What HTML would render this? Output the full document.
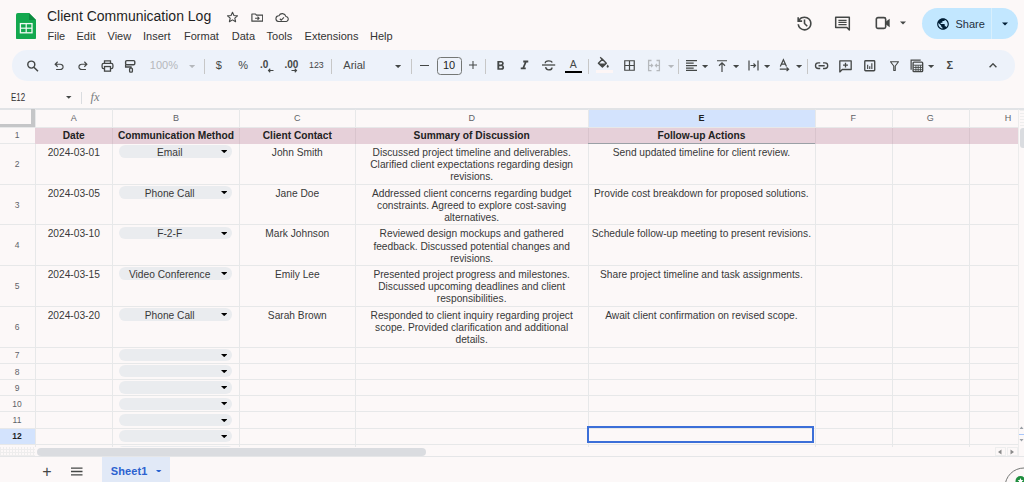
<!DOCTYPE html>
<html><head><meta charset="utf-8"><title>Client Communication Log</title>
<style>
html,body{margin:0;padding:0;}
body{width:1024px;height:482px;overflow:hidden;position:relative;background:#fcf8f8;font-family:"Liberation Sans",sans-serif;}
</style></head><body>
<svg style="position:absolute;left:16.4px;top:12.5px;" width="20" height="26.5" viewBox="0 0 20 26.5"><path d="M0 1.8Q0 0 1.8 0H13L20 7V24.7Q20 26.5 18.2 26.5H1.8Q0 26.5 0 24.7Z" fill="#13a84f"/><path d="M13 0L20 7H13Z" fill="#0b8a3f"/><rect x="4.4" y="10.6" width="11.6" height="9.2" fill="none" stroke="#f4fbf6" stroke-width="1.3"/><line x1="4.4" y1="15.2" x2="16" y2="15.2" stroke="#f4fbf6" stroke-width="1.2"/><line x1="10.2" y1="10.6" x2="10.2" y2="19.8" stroke="#f4fbf6" stroke-width="1.2"/></svg><div style="position:absolute;left:47px;top:9.15px;font-size:14px;line-height:14px;color:#1f1f1f;font-weight:400;white-space:nowrap;">Client Communication Log</div><svg style="position:absolute;left:226px;top:11px;" width="13" height="12" viewBox="0 0 24 24"><path d="M12 2.5l2.9 6.6 7.1.6-5.4 4.7 1.6 7-6.2-3.7-6.2 3.7 1.6-7L2 9.7l7.1-.6z" fill="none" stroke="#444746" stroke-width="2.2" stroke-linejoin="round"/></svg><svg style="position:absolute;left:250.7px;top:13px;" width="12.6" height="9.2" viewBox="0 0 28 20"><path d="M2 2h8l2 2.5h14v13.5H2z" fill="none" stroke="#444746" stroke-width="2.6" stroke-linejoin="round"/><path d="M9 11.5h9M14.5 8l3.5 3.5-3.5 3.5" fill="none" stroke="#444746" stroke-width="2.4"/></svg><svg style="position:absolute;left:274.8px;top:13px;" width="13.8" height="9.2" viewBox="0 0 30 20"><path d="M8 18.5h15a5.5 5.5 0 0 0 .6-11A8 8 0 0 0 8.6 6 6.2 6.2 0 0 0 8 18.5z" fill="none" stroke="#444746" stroke-width="2.4" stroke-linejoin="round"/><path d="M10.5 12.5l3 3 6-6" fill="none" stroke="#444746" stroke-width="2.4"/></svg><div style="position:absolute;left:47.5px;top:30.89px;font-size:11px;line-height:11px;color:#333;font-weight:400;white-space:nowrap;">File</div><div style="position:absolute;left:76.5px;top:30.89px;font-size:11px;line-height:11px;color:#333;font-weight:400;white-space:nowrap;">Edit</div><div style="position:absolute;left:107.5px;top:30.89px;font-size:11px;line-height:11px;color:#333;font-weight:400;white-space:nowrap;">View</div><div style="position:absolute;left:143px;top:30.89px;font-size:11px;line-height:11px;color:#333;font-weight:400;white-space:nowrap;">Insert</div><div style="position:absolute;left:184px;top:30.89px;font-size:11px;line-height:11px;color:#333;font-weight:400;white-space:nowrap;">Format</div><div style="position:absolute;left:231.8px;top:30.89px;font-size:11px;line-height:11px;color:#333;font-weight:400;white-space:nowrap;">Data</div><div style="position:absolute;left:266.6px;top:30.89px;font-size:11px;line-height:11px;color:#333;font-weight:400;white-space:nowrap;">Tools</div><div style="position:absolute;left:304.6px;top:30.89px;font-size:11px;line-height:11px;color:#333;font-weight:400;white-space:nowrap;">Extensions</div><div style="position:absolute;left:370px;top:30.89px;font-size:11px;line-height:11px;color:#333;font-weight:400;white-space:nowrap;">Help</div><svg style="position:absolute;left:795px;top:13.5px;" width="19" height="19" viewBox="0 -960 960 960"><path d="M480-120q-138 0-240.5-91.5T122-440h82q14 104 92.5 172T480-200q117 0 198.5-81.5T760-480q0-117-81.5-198.5T480-760q-69 0-129 32t-101 88h110v80H120v-240h80v94q51-64 124.5-99T480-840q75 0 140.5 28.5t114 77q48.5 48.5 77 114T840-480q0 75-28.5 140.5t-77 114q-48.5 48.5-114 77T480-120Zm112-192L440-464v-216h80v184l128 128-56 56Z" fill="#444746"/></svg><svg style="position:absolute;left:834px;top:16px;" width="17" height="15" viewBox="0 0 24 22"><path d="M2 2h20v18.5L18.5 17H2z" fill="none" stroke="#444746" stroke-width="2.2" stroke-linejoin="round"/><path d="M6 6.5h12M6 9.5h12M6 12.5h12" stroke="#444746" stroke-width="1.8"/></svg><svg style="position:absolute;left:875px;top:16px;" width="16" height="14" viewBox="0 0 24 20"><rect x="2" y="2" width="14" height="16" rx="2.5" fill="none" stroke="#444746" stroke-width="2.4"/><path d="M16 8l6-4.5v13L16 12z" fill="#444746"/></svg><svg style="position:absolute;left:899.5px;top:21px;" width="6" height="4" viewBox="0 0 10 5"><path d="M0 0h10L5 5z" fill="#444746"/></svg><div style="position:absolute;left:922.3px;top:8px;width:95.7px;height:31px;background:#c2e7ff;border-radius:15.5px;"></div><div style="position:absolute;left:991px;top:8px;width:1px;height:31px;background:#d8effc;"></div><svg style="position:absolute;left:936px;top:16.7px;" width="14" height="14" viewBox="0 0 24 24"><path d="M12 2C6.48 2 2 6.48 2 12s4.48 10 10 10 10-4.48 10-10S17.52 2 12 2zm-1 17.93c-3.95-.49-7-3.85-7-7.93 0-.62.08-1.21.21-1.79L9 15v1c0 1.1.9 2 2 2v1.93zm6.9-2.54c-.26-.81-1-1.39-1.9-1.39h-1v-3c0-.55-.45-1-1-1H8v-2h2c.55 0 1-.45 1-1V7h2c1.1 0 2-.9 2-2v-.41c2.93 1.19 5 4.06 5 7.41 0 2.08-.8 3.97-2.1 5.39z" fill="#001d35"/></svg><div style="position:absolute;left:955.5px;top:18.59px;font-size:11px;line-height:11px;color:#1e2f40;font-weight:400;white-space:nowrap;">Share</div><svg style="position:absolute;left:1002px;top:21.5px;" width="6" height="4" viewBox="0 0 10 5"><path d="M0 0h10L5 5z" fill="#001d35"/></svg><div style="position:absolute;left:12px;top:50px;width:1002.5px;height:30.5px;background:#edf2fa;border-radius:15px;"></div><div style="position:absolute;left:204px;top:58.5px;width:1px;height:15px;background:#c7c7c7;"></div><div style="position:absolute;left:331px;top:58.5px;width:1px;height:15px;background:#c7c7c7;"></div><div style="position:absolute;left:411px;top:58.5px;width:1px;height:15px;background:#c7c7c7;"></div><div style="position:absolute;left:485px;top:58.5px;width:1px;height:15px;background:#c7c7c7;"></div><div style="position:absolute;left:588px;top:58.5px;width:1px;height:15px;background:#c7c7c7;"></div><div style="position:absolute;left:678px;top:58.5px;width:1px;height:15px;background:#c7c7c7;"></div><div style="position:absolute;left:807px;top:58.5px;width:1px;height:15px;background:#c7c7c7;"></div><svg style="position:absolute;left:25px;top:58px;" width="16" height="16" viewBox="0 0 16 16"><circle cx="6.3" cy="6.6" r="3.5" fill="none" stroke="#444746" stroke-width="1.45"/><path d="M8.9 9.2L13 13.2" stroke="#444746" stroke-width="1.5"/></svg><svg style="position:absolute;left:51.8px;top:59.3px;" width="14" height="14" viewBox="0 -960 960 960"><path d="M280-200v-80h284q63 0 109.5-40T720-420q0-60-46.5-100T564-560H312l104 104-56 56-200-200 200-200 56 56-104 104h252q97 0 166.5 63T800-420q0 94-69.5 157T564-200H280Z" fill="#444746"/></svg><svg style="position:absolute;left:75.8px;top:59.3px;" width="14" height="14" viewBox="0 -960 960 960"><g transform="scale(-1 1) translate(-960 0)"><path d="M280-200v-80h284q63 0 109.5-40T720-420q0-60-46.5-100T564-560H312l104 104-56 56-200-200 200-200 56 56-104 104h252q97 0 166.5 63T800-420q0 94-69.5 157T564-200H280Z" fill="#444746"/></g></svg><svg style="position:absolute;left:100.5px;top:59.5px;" width="13" height="12" viewBox="0 0 24 22"><path d="M6.5 6V1.5h11V6" fill="none" stroke="#444746" stroke-width="2.4"/><rect x="2" y="6" width="20" height="10" rx="3" fill="none" stroke="#444746" stroke-width="2.4"/><rect x="6.5" y="12" width="11" height="8.5" fill="#edf2fa" stroke="#444746" stroke-width="2.4"/></svg><svg style="position:absolute;left:120px;top:56px;" width="20" height="20" viewBox="120 56 20 20"><rect x="125.6" y="60.6" width="9.2" height="4.2" rx="1.2" fill="none" stroke="#444746" stroke-width="1.4"/><path d="M125.6 64.5V67H131V68.2" fill="none" stroke="#444746" stroke-width="1.3"/><rect x="129.6" y="68.2" width="2.8" height="4" rx="0.9" fill="none" stroke="#444746" stroke-width="1.3"/></svg><div style="position:absolute;left:149.8px;top:59.99px;font-size:11px;line-height:11px;color:#b5b8bc;font-weight:400;white-space:nowrap;">100%</div><svg style="position:absolute;left:188.5px;top:64.5px;" width="6.2" height="3.1" viewBox="0 0 10 5"><path d="M0 0h10L5 5z" fill="#b5b8bc"/></svg><div style="position:absolute;left:215.8px;top:59.99px;font-size:11px;line-height:11px;color:#444746;font-weight:400;white-space:nowrap;">$</div><div style="position:absolute;left:238.3px;top:59.99px;font-size:11px;line-height:11px;color:#444746;font-weight:400;white-space:nowrap;">%</div><div style="position:absolute;left:260px;top:59.53px;font-size:10px;line-height:10px;color:#444746;font-weight:700;white-space:nowrap;">.0</div><svg style="position:absolute;left:267px;top:67.5px;" width="7" height="5" viewBox="0 0 14 10"><path d="M13 5H3M6.5 1.5L3 5l3.5 3.5" fill="none" stroke="#444746" stroke-width="2.2"/></svg><div style="position:absolute;left:284.5px;top:59.53px;font-size:10px;line-height:10px;color:#444746;font-weight:700;white-space:nowrap;">.00</div><svg style="position:absolute;left:291px;top:67.5px;" width="7" height="5" viewBox="0 0 14 10"><path d="M1 5h10M7.5 1.5L11 5 7.5 8.5" fill="none" stroke="#444746" stroke-width="2.2"/></svg><div style="position:absolute;left:309px;top:61.15px;font-size:8.8px;line-height:8.8px;color:#444746;font-weight:400;white-space:nowrap;">123</div><div style="position:absolute;left:343.3px;top:60.19px;font-size:11px;line-height:11px;color:#444746;font-weight:400;white-space:nowrap;">Arial</div><svg style="position:absolute;left:394.5px;top:64.5px;" width="6.2" height="3.1" viewBox="0 0 10 5"><path d="M0 0h10L5 5z" fill="#444746"/></svg><div style="position:absolute;left:420px;top:64.8px;width:8.6px;height:1.2px;background:#444746;"></div><div style="position:absolute;left:436.5px;top:56.5px;width:25px;height:18px;border:1px solid #747775;border-radius:3.5px;box-sizing:border-box;"></div><div style="position:absolute;left:439.00px;width:20px;text-align:center;top:60.19px;font-size:11px;line-height:11px;color:#1f1f1f;font-weight:400;white-space:nowrap;">10</div><svg style="position:absolute;left:468.5px;top:61px;" width="8" height="8" viewBox="0 0 10 10"><path d="M5 0v10M0 5h10" stroke="#444746" stroke-width="1.3"/></svg><svg style="position:absolute;left:492.5px;top:57.5px;" width="15" height="16" viewBox="0 0 24 24"><path d="M15.6 10.79c.97-.67 1.65-1.77 1.65-2.79 0-2.26-1.75-4-4-4H7v14h7.04c2.09 0 3.71-1.7 3.71-3.79 0-1.52-.86-2.82-2.15-3.42zM10 6.5h3c.83 0 1.5.67 1.5 1.5s-.67 1.5-1.5 1.5h-3v-3zm3.5 9H10v-3h3.5c.83 0 1.5.67 1.5 1.5s-.67 1.5-1.5 1.5z" fill="#444746"/></svg><svg style="position:absolute;left:516.5px;top:57px;" width="15" height="17" viewBox="0 0 24 24"><path d="M10 4v3h2.21l-3.42 8H6v3h8v-3h-2.21l3.42-8H18V4z" fill="#444746"/></svg><svg style="position:absolute;left:540px;top:56px;" width="18" height="18" viewBox="540 56 18 18"><path d="M545.3 63.2Q545.1 60.9 548.6 60.9Q551.6 60.9 552.2 62.6M545.6 67.2Q546.2 69.9 548.6 69.9Q552 69.9 552 67.4" fill="none" stroke="#444746" stroke-width="1.4"/><path d="M542 65H555.2" stroke="#444746" stroke-width="1.3"/></svg><div style="position:absolute;left:563.30px;width:20px;text-align:center;top:58.71px;font-size:10.5px;line-height:10.5px;color:#444746;font-weight:400;white-space:nowrap;">A</div><div style="position:absolute;left:564.5px;top:70.5px;width:17.5px;height:2.6px;background:#000;"></div><svg style="position:absolute;left:590px;top:52px;" width="26" height="26" viewBox="590 52 26 26"><path d="M600.2 57.3L602.6 59.8" stroke="#444746" stroke-width="1.3"/><path d="M598.4 63.2L602.4 59.3L606.3 63.2L602.4 67z" fill="none" stroke="#444746" stroke-width="1.4" stroke-linejoin="round"/><path d="M598.6 63.4H606.1L602.4 67z" fill="#444746"/><path d="M607.7 64.6Q608.8 65.9 608.8 66.6A1.1 1.1 0 0 1 606.6 66.6Q606.6 65.9 607.7 64.6z" fill="#444746"/></svg><div style="position:absolute;left:595.7px;top:70px;width:17.3px;height:3px;background:#fdf6f6;"></div><svg style="position:absolute;left:624px;top:60px;" width="11" height="11" viewBox="0 0 22 22"><path d="M1.5 1.5h19v19h-19zM11 1.5v19M1.5 11h19" fill="none" stroke="#444746" stroke-width="2.4"/></svg><svg style="position:absolute;left:644px;top:56px;" width="20" height="20" viewBox="644 56 20 20"><path d="M651.5 60.5H648.6V70.6H651.5M656.5 60.5H659.4V70.6H656.5" fill="none" stroke="#b5b8bc" stroke-width="1.3"/><path d="M648.6 65.5H652.6M651 63.9L652.6 65.5 651 67.1M659.4 65.5H655.4M657 63.9L655.4 65.5 657 67.1" fill="none" stroke="#b5b8bc" stroke-width="1.2"/></svg><svg style="position:absolute;left:667.5px;top:64.5px;" width="6.2" height="3.1" viewBox="0 0 10 5"><path d="M0 0h10L5 5z" fill="#b5b8bc"/></svg><svg style="position:absolute;left:686px;top:60px;" width="11" height="11" viewBox="0 0 20 20"><path d="M0 1h20M0 5.6h14M0 10.2h20M0 14.8h14M0 19h20" stroke="#444746" stroke-width="2.2"/></svg><svg style="position:absolute;left:702px;top:64.5px;" width="6.2" height="3.1" viewBox="0 0 10 5"><path d="M0 0h10L5 5z" fill="#444746"/></svg><svg style="position:absolute;left:717px;top:59.5px;" width="10" height="12" viewBox="0 0 20 24"><path d="M0 1.5h20M10 24V6M4 11.5l6-6 6 6" fill="none" stroke="#444746" stroke-width="2.4"/></svg><svg style="position:absolute;left:733px;top:64.5px;" width="6.2" height="3.1" viewBox="0 0 10 5"><path d="M0 0h10L5 5z" fill="#444746"/></svg><svg style="position:absolute;left:747.5px;top:60px;" width="11" height="11" viewBox="0 0 22 22"><path d="M2 1v20M20 1v20M5 11h10M11 7l4 4-4 4" fill="none" stroke="#444746" stroke-width="2.4"/></svg><svg style="position:absolute;left:764px;top:64.5px;" width="6.2" height="3.1" viewBox="0 0 10 5"><path d="M0 0h10L5 5z" fill="#444746"/></svg><svg style="position:absolute;left:776px;top:56px;" width="18" height="18" viewBox="776 56 18 18"><path d="M780.3 66.6L783.4 59.8L786.5 66.6M781.4 64.2H785.4" fill="none" stroke="#444746" stroke-width="1.2"/><path d="M779.8 69.2H788.5M786.6 67.4L788.6 69.2 786.6 71" fill="none" stroke="#444746" stroke-width="1.2"/></svg><svg style="position:absolute;left:795.5px;top:64.5px;" width="6.2" height="3.1" viewBox="0 0 10 5"><path d="M0 0h10L5 5z" fill="#444746"/></svg><svg style="position:absolute;left:805px;top:52px;" width="26" height="26" viewBox="805 52 26 26"><path d="M820.2 62.9H818.3A2.8 2.8 0 0 0 818.3 68.5H820.2M823 62.9H824.9A2.8 2.8 0 0 1 824.9 68.5H823M818.5 65.7H824.7" fill="none" stroke="#444746" stroke-width="1.35"/></svg><svg style="position:absolute;left:839px;top:59.5px;" width="13" height="13" viewBox="0 0 24 24"><path d="M1.5 1.5h21v16H6l-4.5 4.5z" fill="none" stroke="#444746" stroke-width="2.4" stroke-linejoin="round"/><path d="M12 5v9M7.5 9.5h9" stroke="#444746" stroke-width="2.4"/></svg><svg style="position:absolute;left:864px;top:60px;" width="11.5" height="11.5" viewBox="0 0 22 22"><rect x="1.5" y="1.5" width="19" height="19" rx="1.5" fill="none" stroke="#444746" stroke-width="2.6"/><path d="M7 9v8M11 12v5M15 6v11" stroke="#444746" stroke-width="2.2"/></svg><svg style="position:absolute;left:890px;top:61px;" width="9" height="10" viewBox="0 0 18 20"><path d="M1 1.5h16L10.5 10v9h-3v-9z" fill="none" stroke="#444746" stroke-width="2.2" stroke-linejoin="round"/></svg><svg style="position:absolute;left:910px;top:59px;" width="13.5" height="13.5" viewBox="0 0 24 24"><path d="M2 19V2h17" fill="none" stroke="#444746" stroke-width="2.2"/><rect x="5.5" y="5.5" width="17" height="17" rx="1.5" fill="none" stroke="#444746" stroke-width="2.4"/><path d="M6 11h16M10.5 11v11M14.5 11v11M18.5 11v11M6 15h16M6 19h16" stroke="#444746" stroke-width="1.6"/></svg><svg style="position:absolute;left:927.5px;top:64.5px;" width="6.2" height="3.1" viewBox="0 0 10 5"><path d="M0 0h10L5 5z" fill="#444746"/></svg><div style="position:absolute;left:946.5px;top:60.19px;font-size:11px;line-height:11px;color:#444746;font-weight:700;white-space:nowrap;">&#931;</div><svg style="position:absolute;left:989px;top:63px;" width="8" height="5" viewBox="0 0 14 8"><path d="M1 7l6-6 6 6" fill="none" stroke="#444746" stroke-width="2.4"/></svg><div style="position:absolute;left:11.2px;top:92.31px;font-size:10.5px;line-height:10.5px;color:#333;font-weight:400;white-space:nowrap;transform:scaleX(0.76);transform-origin:0 0;">E12</div><svg style="position:absolute;left:66px;top:96px;" width="5.5" height="2.75" viewBox="0 0 10 5"><path d="M0 0h10L5 5z" fill="#444746"/></svg><div style="position:absolute;left:80.5px;top:92.2px;width:1px;height:12px;background:#dadce0;"></div><div style="position:absolute;left:90.5px;top:91.02px;font-size:12.5px;line-height:12.5px;color:#7a7e82;font-weight:400;white-space:nowrap;font-family:Liberation Serif;font-style:italic;">fx</div><div style="position:absolute;left:588px;top:109px;width:226.8px;height:18px;background:#d3e3fd;"></div><div style="position:absolute;left:0px;top:428px;width:35px;height:16.2px;background:#d3e3fd;"></div><div style="position:absolute;left:0px;top:108px;width:1024px;height:1.5px;background:#e1e3e6;"></div><div style="position:absolute;left:111.5px;top:109px;width:1px;height:338px;background:#e7e8e9;"></div><div style="position:absolute;left:238.5px;top:109px;width:1px;height:338px;background:#e7e8e9;"></div><div style="position:absolute;left:354.5px;top:109px;width:1px;height:338px;background:#e7e8e9;"></div><div style="position:absolute;left:587.5px;top:109px;width:1px;height:338px;background:#e7e8e9;"></div><div style="position:absolute;left:814.5px;top:109px;width:1px;height:338px;background:#e7e8e9;"></div><div style="position:absolute;left:891.5px;top:109px;width:1px;height:338px;background:#e7e8e9;"></div><div style="position:absolute;left:968.5px;top:109px;width:1px;height:338px;background:#e7e8e9;"></div><div style="position:absolute;left:1017.5px;top:109px;width:1px;height:338px;background:#e7e8e9;"></div><div style="position:absolute;left:34.5px;top:109px;width:1px;height:338px;background:#e7e8e9;"></div><div style="position:absolute;left:0px;top:126.5px;width:1017.5px;height:1px;background:#e7e8e9;"></div><div style="position:absolute;left:0px;top:142.8px;width:35px;height:1px;background:#e7e8e9;"></div><div style="position:absolute;left:0px;top:183.6px;width:1017.5px;height:1px;background:#e7e8e9;"></div><div style="position:absolute;left:0px;top:224.3px;width:1017.5px;height:1px;background:#e7e8e9;"></div><div style="position:absolute;left:0px;top:265.0px;width:1017.5px;height:1px;background:#e7e8e9;"></div><div style="position:absolute;left:0px;top:305.7px;width:1017.5px;height:1px;background:#e7e8e9;"></div><div style="position:absolute;left:0px;top:346.5px;width:1017.5px;height:1px;background:#e7e8e9;"></div><div style="position:absolute;left:0px;top:362.7px;width:1017.5px;height:1px;background:#e7e8e9;"></div><div style="position:absolute;left:0px;top:378.9px;width:1017.5px;height:1px;background:#e7e8e9;"></div><div style="position:absolute;left:0px;top:395.1px;width:1017.5px;height:1px;background:#e7e8e9;"></div><div style="position:absolute;left:0px;top:411.3px;width:1017.5px;height:1px;background:#e7e8e9;"></div><div style="position:absolute;left:0px;top:427.5px;width:1017.5px;height:1px;background:#e7e8e9;"></div><div style="position:absolute;left:0px;top:443.7px;width:1017.5px;height:1px;background:#e7e8e9;"></div><div style="position:absolute;left:35px;top:127.5px;width:982.5px;height:16px;background:#e6d0d9;"></div><div style="position:absolute;left:111.5px;top:127.5px;width:1px;height:16px;background:#d9c4cd;"></div><div style="position:absolute;left:238.5px;top:127.5px;width:1px;height:16px;background:#d9c4cd;"></div><div style="position:absolute;left:354.5px;top:127.5px;width:1px;height:16px;background:#d9c4cd;"></div><div style="position:absolute;left:587.5px;top:127.5px;width:1px;height:16px;background:#d9c4cd;"></div><div style="position:absolute;left:814.5px;top:127.5px;width:1px;height:16px;background:#d9c4cd;"></div><div style="position:absolute;left:891.5px;top:127.5px;width:1px;height:16px;background:#d9c4cd;"></div><div style="position:absolute;left:968.5px;top:127.5px;width:1px;height:16px;background:#d9c4cd;"></div><div style="position:absolute;left:588px;top:142.5px;width:226.8px;height:1.3px;background:#9aa0a6;"></div><div style="position:absolute;left:31px;top:109px;width:4px;height:18px;background:#c5c6c8;"></div><div style="position:absolute;left:0px;top:123.5px;width:35px;height:3.5px;background:#c5c6c8;"></div><div style="position:absolute;left:43.75px;width:60px;text-align:center;top:113.88px;font-size:9px;line-height:9px;color:#5f6368;font-weight:400;white-space:nowrap;">A</div><div style="position:absolute;left:145.90px;width:60px;text-align:center;top:113.88px;font-size:9px;line-height:9px;color:#5f6368;font-weight:400;white-space:nowrap;">B</div><div style="position:absolute;left:267.30px;width:60px;text-align:center;top:113.88px;font-size:9px;line-height:9px;color:#5f6368;font-weight:400;white-space:nowrap;">C</div><div style="position:absolute;left:441.65px;width:60px;text-align:center;top:113.88px;font-size:9px;line-height:9px;color:#5f6368;font-weight:400;white-space:nowrap;">D</div><div style="position:absolute;left:671.40px;width:60px;text-align:center;top:113.88px;font-size:9px;line-height:9px;color:#1f1f1f;font-weight:700;white-space:nowrap;">E</div><div style="position:absolute;left:823.15px;width:60px;text-align:center;top:113.88px;font-size:9px;line-height:9px;color:#5f6368;font-weight:400;white-space:nowrap;">F</div><div style="position:absolute;left:900.25px;width:60px;text-align:center;top:113.88px;font-size:9px;line-height:9px;color:#5f6368;font-weight:400;white-space:nowrap;">G</div><div style="position:absolute;left:978.00px;width:60px;text-align:center;top:113.88px;font-size:9px;line-height:9px;color:#5f6368;font-weight:400;white-space:nowrap;">H</div><div style="position:absolute;left:2.00px;width:30px;text-align:center;top:131.45px;font-size:8.5px;line-height:8.5px;color:#5f6368;font-weight:400;white-space:nowrap;">1</div><div style="position:absolute;left:2.00px;width:30px;text-align:center;top:160.00px;font-size:8.5px;line-height:8.5px;color:#5f6368;font-weight:400;white-space:nowrap;">2</div><div style="position:absolute;left:2.00px;width:30px;text-align:center;top:200.75px;font-size:8.5px;line-height:8.5px;color:#5f6368;font-weight:400;white-space:nowrap;">3</div><div style="position:absolute;left:2.00px;width:30px;text-align:center;top:241.45px;font-size:8.5px;line-height:8.5px;color:#5f6368;font-weight:400;white-space:nowrap;">4</div><div style="position:absolute;left:2.00px;width:30px;text-align:center;top:282.15px;font-size:8.5px;line-height:8.5px;color:#5f6368;font-weight:400;white-space:nowrap;">5</div><div style="position:absolute;left:2.00px;width:30px;text-align:center;top:322.90px;font-size:8.5px;line-height:8.5px;color:#5f6368;font-weight:400;white-space:nowrap;">6</div><div style="position:absolute;left:2.00px;width:30px;text-align:center;top:351.40px;font-size:8.5px;line-height:8.5px;color:#5f6368;font-weight:400;white-space:nowrap;">7</div><div style="position:absolute;left:2.00px;width:30px;text-align:center;top:367.60px;font-size:8.5px;line-height:8.5px;color:#5f6368;font-weight:400;white-space:nowrap;">8</div><div style="position:absolute;left:2.00px;width:30px;text-align:center;top:383.80px;font-size:8.5px;line-height:8.5px;color:#5f6368;font-weight:400;white-space:nowrap;">9</div><div style="position:absolute;left:2.00px;width:30px;text-align:center;top:400.00px;font-size:8.5px;line-height:8.5px;color:#5f6368;font-weight:400;white-space:nowrap;">10</div><div style="position:absolute;left:2.00px;width:30px;text-align:center;top:416.20px;font-size:8.5px;line-height:8.5px;color:#5f6368;font-weight:400;white-space:nowrap;">11</div><div style="position:absolute;left:2.00px;width:30px;text-align:center;top:432.40px;font-size:8.5px;line-height:8.5px;color:#1f1f1f;font-weight:700;white-space:nowrap;">12</div><div style="position:absolute;left:-46.25px;width:240px;text-align:center;top:131.37px;font-size:10.2px;line-height:10.2px;color:#222;font-weight:700;white-space:nowrap;">Date</div><div style="position:absolute;left:55.90px;width:240px;text-align:center;top:131.37px;font-size:10.2px;line-height:10.2px;color:#222;font-weight:700;white-space:nowrap;">Communication Method</div><div style="position:absolute;left:177.30px;width:240px;text-align:center;top:131.37px;font-size:10.2px;line-height:10.2px;color:#222;font-weight:700;white-space:nowrap;">Client Contact</div><div style="position:absolute;left:351.65px;width:240px;text-align:center;top:131.37px;font-size:10.2px;line-height:10.2px;color:#222;font-weight:700;white-space:nowrap;">Summary of Discussion</div><div style="position:absolute;left:581.40px;width:240px;text-align:center;top:131.37px;font-size:10.2px;line-height:10.2px;color:#222;font-weight:700;white-space:nowrap;">Follow-up Actions</div><div style="position:absolute;left:13.75px;width:120px;text-align:center;top:147.87px;font-size:10.2px;line-height:10.2px;color:#383838;font-weight:400;white-space:nowrap;">2024-03-01</div><div style="position:absolute;left:119.3px;top:145.20000000000002px;width:112.4px;height:12.6px;background:#eaecef;border-radius:6.3px;"></div><div style="position:absolute;left:109.70px;width:120px;text-align:center;top:147.87px;font-size:10.2px;line-height:10.2px;color:#383838;font-weight:400;white-space:nowrap;">Email</div><svg style="position:absolute;left:220.8px;top:150.10000000000002px;" width="6.4" height="3.2" viewBox="0 0 10 5"><path d="M0 0h10L5 5z" fill="#000"/></svg><div style="position:absolute;left:237.30px;width:120px;text-align:center;top:147.87px;font-size:10.2px;line-height:10.2px;color:#383838;font-weight:400;white-space:nowrap;">John Smith</div><div style="position:absolute;left:351.65px;width:240px;text-align:center;top:147.87px;font-size:10.2px;line-height:10.2px;color:#383838;font-weight:400;white-space:nowrap;">Discussed project timeline and deliverables.</div><div style="position:absolute;left:351.65px;width:240px;text-align:center;top:160.07px;font-size:10.2px;line-height:10.2px;color:#383838;font-weight:400;white-space:nowrap;">Clarified client expectations regarding design</div><div style="position:absolute;left:351.65px;width:240px;text-align:center;top:172.27px;font-size:10.2px;line-height:10.2px;color:#383838;font-weight:400;white-space:nowrap;">revisions.</div><div style="position:absolute;left:571.40px;width:260px;text-align:center;top:147.87px;font-size:10.2px;line-height:10.2px;color:#383838;font-weight:400;white-space:nowrap;">Send updated timeline for client review.</div><div style="position:absolute;left:13.75px;width:120px;text-align:center;top:188.67px;font-size:10.2px;line-height:10.2px;color:#383838;font-weight:400;white-space:nowrap;">2024-03-05</div><div style="position:absolute;left:119.3px;top:186.0px;width:112.4px;height:12.6px;background:#eaecef;border-radius:6.3px;"></div><div style="position:absolute;left:109.70px;width:120px;text-align:center;top:188.67px;font-size:10.2px;line-height:10.2px;color:#383838;font-weight:400;white-space:nowrap;">Phone Call</div><svg style="position:absolute;left:220.8px;top:190.9px;" width="6.4" height="3.2" viewBox="0 0 10 5"><path d="M0 0h10L5 5z" fill="#000"/></svg><div style="position:absolute;left:237.30px;width:120px;text-align:center;top:188.67px;font-size:10.2px;line-height:10.2px;color:#383838;font-weight:400;white-space:nowrap;">Jane Doe</div><div style="position:absolute;left:351.65px;width:240px;text-align:center;top:188.67px;font-size:10.2px;line-height:10.2px;color:#383838;font-weight:400;white-space:nowrap;">Addressed client concerns regarding budget</div><div style="position:absolute;left:351.65px;width:240px;text-align:center;top:200.87px;font-size:10.2px;line-height:10.2px;color:#383838;font-weight:400;white-space:nowrap;">constraints. Agreed to explore cost-saving</div><div style="position:absolute;left:351.65px;width:240px;text-align:center;top:213.07px;font-size:10.2px;line-height:10.2px;color:#383838;font-weight:400;white-space:nowrap;">alternatives.</div><div style="position:absolute;left:571.40px;width:260px;text-align:center;top:188.67px;font-size:10.2px;line-height:10.2px;color:#383838;font-weight:400;white-space:nowrap;">Provide cost breakdown for proposed solutions.</div><div style="position:absolute;left:13.75px;width:120px;text-align:center;top:229.37px;font-size:10.2px;line-height:10.2px;color:#383838;font-weight:400;white-space:nowrap;">2024-03-10</div><div style="position:absolute;left:119.3px;top:226.70000000000002px;width:112.4px;height:12.6px;background:#eaecef;border-radius:6.3px;"></div><div style="position:absolute;left:109.70px;width:120px;text-align:center;top:229.37px;font-size:10.2px;line-height:10.2px;color:#383838;font-weight:400;white-space:nowrap;">F-2-F</div><svg style="position:absolute;left:220.8px;top:231.60000000000002px;" width="6.4" height="3.2" viewBox="0 0 10 5"><path d="M0 0h10L5 5z" fill="#000"/></svg><div style="position:absolute;left:237.30px;width:120px;text-align:center;top:229.37px;font-size:10.2px;line-height:10.2px;color:#383838;font-weight:400;white-space:nowrap;">Mark Johnson</div><div style="position:absolute;left:351.65px;width:240px;text-align:center;top:229.37px;font-size:10.2px;line-height:10.2px;color:#383838;font-weight:400;white-space:nowrap;">Reviewed design mockups and gathered</div><div style="position:absolute;left:351.65px;width:240px;text-align:center;top:241.57px;font-size:10.2px;line-height:10.2px;color:#383838;font-weight:400;white-space:nowrap;">feedback. Discussed potential changes and</div><div style="position:absolute;left:351.65px;width:240px;text-align:center;top:253.77px;font-size:10.2px;line-height:10.2px;color:#383838;font-weight:400;white-space:nowrap;">revisions.</div><div style="position:absolute;left:571.40px;width:260px;text-align:center;top:229.37px;font-size:10.2px;line-height:10.2px;color:#383838;font-weight:400;white-space:nowrap;">Schedule follow-up meeting to present revisions.</div><div style="position:absolute;left:13.75px;width:120px;text-align:center;top:270.07px;font-size:10.2px;line-height:10.2px;color:#383838;font-weight:400;white-space:nowrap;">2024-03-15</div><div style="position:absolute;left:119.3px;top:267.4px;width:112.4px;height:12.6px;background:#eaecef;border-radius:6.3px;"></div><div style="position:absolute;left:109.70px;width:120px;text-align:center;top:270.07px;font-size:10.2px;line-height:10.2px;color:#383838;font-weight:400;white-space:nowrap;">Video Conference</div><svg style="position:absolute;left:220.8px;top:272.3px;" width="6.4" height="3.2" viewBox="0 0 10 5"><path d="M0 0h10L5 5z" fill="#000"/></svg><div style="position:absolute;left:237.30px;width:120px;text-align:center;top:270.07px;font-size:10.2px;line-height:10.2px;color:#383838;font-weight:400;white-space:nowrap;">Emily Lee</div><div style="position:absolute;left:351.65px;width:240px;text-align:center;top:270.07px;font-size:10.2px;line-height:10.2px;color:#383838;font-weight:400;white-space:nowrap;">Presented project progress and milestones.</div><div style="position:absolute;left:351.65px;width:240px;text-align:center;top:282.27px;font-size:10.2px;line-height:10.2px;color:#383838;font-weight:400;white-space:nowrap;">Discussed upcoming deadlines and client</div><div style="position:absolute;left:351.65px;width:240px;text-align:center;top:294.47px;font-size:10.2px;line-height:10.2px;color:#383838;font-weight:400;white-space:nowrap;">responsibilities.</div><div style="position:absolute;left:571.40px;width:260px;text-align:center;top:270.07px;font-size:10.2px;line-height:10.2px;color:#383838;font-weight:400;white-space:nowrap;">Share project timeline and task assignments.</div><div style="position:absolute;left:13.75px;width:120px;text-align:center;top:310.77px;font-size:10.2px;line-height:10.2px;color:#383838;font-weight:400;white-space:nowrap;">2024-03-20</div><div style="position:absolute;left:119.3px;top:308.09999999999997px;width:112.4px;height:12.6px;background:#eaecef;border-radius:6.3px;"></div><div style="position:absolute;left:109.70px;width:120px;text-align:center;top:310.77px;font-size:10.2px;line-height:10.2px;color:#383838;font-weight:400;white-space:nowrap;">Phone Call</div><svg style="position:absolute;left:220.8px;top:313.0px;" width="6.4" height="3.2" viewBox="0 0 10 5"><path d="M0 0h10L5 5z" fill="#000"/></svg><div style="position:absolute;left:237.30px;width:120px;text-align:center;top:310.77px;font-size:10.2px;line-height:10.2px;color:#383838;font-weight:400;white-space:nowrap;">Sarah Brown</div><div style="position:absolute;left:351.65px;width:240px;text-align:center;top:310.77px;font-size:10.2px;line-height:10.2px;color:#383838;font-weight:400;white-space:nowrap;">Responded to client inquiry regarding project</div><div style="position:absolute;left:351.65px;width:240px;text-align:center;top:322.97px;font-size:10.2px;line-height:10.2px;color:#383838;font-weight:400;white-space:nowrap;">scope. Provided clarification and additional</div><div style="position:absolute;left:351.65px;width:240px;text-align:center;top:335.17px;font-size:10.2px;line-height:10.2px;color:#383838;font-weight:400;white-space:nowrap;">details.</div><div style="position:absolute;left:571.40px;width:260px;text-align:center;top:310.77px;font-size:10.2px;line-height:10.2px;color:#383838;font-weight:400;white-space:nowrap;">Await client confirmation on revised scope.</div><div style="position:absolute;left:119.3px;top:349px;width:112.4px;height:12.2px;background:#eaecef;border-radius:6.1px;"></div><svg style="position:absolute;left:220.8px;top:353.8px;" width="6.4" height="3.2" viewBox="0 0 10 5"><path d="M0 0h10L5 5z" fill="#000"/></svg><div style="position:absolute;left:119.3px;top:365.2px;width:112.4px;height:12.2px;background:#eaecef;border-radius:6.1px;"></div><svg style="position:absolute;left:220.8px;top:370.0px;" width="6.4" height="3.2" viewBox="0 0 10 5"><path d="M0 0h10L5 5z" fill="#000"/></svg><div style="position:absolute;left:119.3px;top:381.4px;width:112.4px;height:12.2px;background:#eaecef;border-radius:6.1px;"></div><svg style="position:absolute;left:220.8px;top:386.2px;" width="6.4" height="3.2" viewBox="0 0 10 5"><path d="M0 0h10L5 5z" fill="#000"/></svg><div style="position:absolute;left:119.3px;top:397.6px;width:112.4px;height:12.2px;background:#eaecef;border-radius:6.1px;"></div><svg style="position:absolute;left:220.8px;top:402.40000000000003px;" width="6.4" height="3.2" viewBox="0 0 10 5"><path d="M0 0h10L5 5z" fill="#000"/></svg><div style="position:absolute;left:119.3px;top:413.8px;width:112.4px;height:12.2px;background:#eaecef;border-radius:6.1px;"></div><svg style="position:absolute;left:220.8px;top:418.6px;" width="6.4" height="3.2" viewBox="0 0 10 5"><path d="M0 0h10L5 5z" fill="#000"/></svg><div style="position:absolute;left:119.3px;top:430px;width:112.4px;height:12.2px;background:#eaecef;border-radius:6.1px;"></div><svg style="position:absolute;left:220.8px;top:434.8px;" width="6.4" height="3.2" viewBox="0 0 10 5"><path d="M0 0h10L5 5z" fill="#000"/></svg><div style="position:absolute;left:119.3px;top:446px;width:112.4px;height:4px;background:#eaecef;border-radius:6px 6px 0 0;"></div><div style="position:absolute;left:587.3px;top:426.2px;width:227px;height:16.5px;border:2px solid #3c6fd8;box-sizing:border-box;"></div><div style="position:absolute;left:0px;top:446.5px;width:1018.5px;height:9.5px;background:#fcf8f8;"></div><div style="position:absolute;left:0px;top:447px;width:35px;height:9px;background-image:repeating-linear-gradient(90deg,#e6e6e6 0 1px,transparent 1px 3px),repeating-linear-gradient(0deg,#e6e6e6 0 1px,transparent 1px 3px);opacity:.6;"></div><div style="position:absolute;left:37px;top:448px;width:388.5px;height:7.5px;background:#dadce0;border-radius:4px;"></div><div style="position:absolute;left:0px;top:455.5px;width:1024px;height:1px;background:#e5e6e8;"></div><svg style="position:absolute;left:995px;top:448px;" width="10" height="8" viewBox="0 0 10 8"><path d="M6.5 1.5L3 4l3.5 2.5z" fill="#8a8a8a"/></svg><svg style="position:absolute;left:1007px;top:448px;" width="10" height="8" viewBox="0 0 10 8"><path d="M3.5 1.5L7 4 3.5 6.5z" fill="#8a8a8a"/></svg><div style="position:absolute;left:1017.5px;top:109.5px;width:6.5px;height:346.5px;background:#fcf8f8;border-left:1px solid #ececec;box-sizing:border-box;"></div><div style="position:absolute;left:1019.5px;top:128px;width:4.5px;height:20px;background:#dadce0;border-radius:3px 0 0 3px;"></div><div style="position:absolute;left:1019.5px;top:110px;width:4.5px;height:16px;background-image:repeating-linear-gradient(0deg,#eeeeee 0 1px,transparent 1px 3px);"></div><svg style="position:absolute;left:1019px;top:425px;" width="5" height="5" viewBox="0 0 10 10"><path d="M1 8l4-5 4 5z" fill="#9aa0a6"/></svg><div style="position:absolute;left:1019px;top:434px;width:5px;height:1px;background:#a8c7fa;"></div><svg style="position:absolute;left:1019px;top:438px;" width="5" height="5" viewBox="0 0 10 10"><path d="M1 2l4 5 4-5z" fill="#9aa0a6"/></svg><div style="position:absolute;left:994.5px;top:447px;width:11.5px;height:8.5px;border:1px solid #eeeeee;box-sizing:border-box;"></div><div style="position:absolute;left:1006.5px;top:447px;width:11px;height:8.5px;border:1px solid #eeeeee;box-sizing:border-box;"></div><div style="position:absolute;left:36.80px;width:20px;text-align:center;top:463.66px;font-size:16px;line-height:16px;color:#444746;font-weight:400;white-space:nowrap;">+</div><svg style="position:absolute;left:71px;top:466.5px;" width="11.5" height="9" viewBox="0 0 12 9"><path d="M0 1h12M0 4.5h12M0 8h12" stroke="#444746" stroke-width="1.5"/></svg><div style="position:absolute;left:101.5px;top:456.5px;width:68.5px;height:25.5px;background:#e1e9f7;"></div><div style="position:absolute;left:110.8px;top:465.69px;font-size:11px;line-height:11px;color:#2b62d0;font-weight:700;white-space:nowrap;letter-spacing:0.1px;">Sheet1</div><svg style="position:absolute;left:156px;top:469.5px;" width="5.5" height="2.75" viewBox="0 0 10 5"><path d="M0 0h10L5 5z" fill="#2b62d0"/></svg><svg style="position:absolute;left:1004px;top:467px;" width="20" height="15" viewBox="0 0 20 15"><circle cx="20" cy="20" r="19" fill="#fcf8f8" stroke="#747775" stroke-width="1"/><circle cx="16.5" cy="14" r="5" fill="#1e8e3e"/><path d="M16.5 11l.9 1.9 2 .2-1.5 1.4.4 2-1.8-1-1.8 1 .4-2-1.5-1.4 2-.2z" fill="#fff"/></svg>
</body></html>
